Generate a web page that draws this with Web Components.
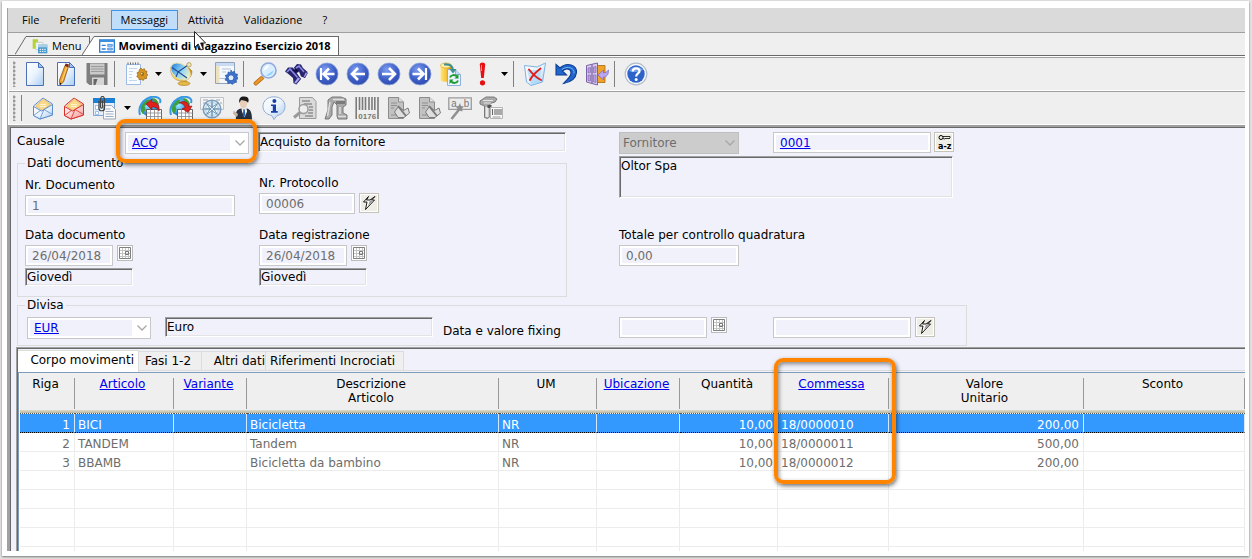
<!DOCTYPE html>
<html lang="it">
<head>
<meta charset="utf-8">
<title>Movimenti di Magazzino Esercizio 2018</title>
<style>
html,body{margin:0;height:100%}
body{background:#e4e4e4;overflow:hidden;
 --form:#f1f1fb;--bar:#efefef;--edge:#a0a0a0;--dark:#696969;--muted:#6d6d6d;
 font:12px/16px "DejaVu Sans",Verdana,sans-serif;color:#000}
</style>
</head>
<body>
<app-window></app-window>
<script>
const BASE = `:host,*{box-sizing:border-box}button,input,select,textarea{font:inherit;color:inherit;margin:0;border-radius:0}svg{display:block}`;
let uid = 0;
function define(name, render){
  customElements.define(name, class extends HTMLElement{
    constructor(){ super(); this.attachShadow({mode:'open'}); }
    connectedCallback(){
      const t = document.createElement('template');
      t.innerHTML = render(this);
      this.shadowRoot.replaceChildren(t.content.cloneNode(true));
    }
  });
}

/* ---------- icons, all on a 24 x 24 grid ---------- */
const DEFS = `<defs>
<linearGradient id="pg" x1="0" y1="0" x2="1" y2="1"><stop offset="0" stop-color="#fff"/><stop offset=".5" stop-color="#eaf3fd"/><stop offset="1" stop-color="#a9cdf3"/></linearGradient>
<radialGradient id="bl" cx=".4" cy=".3" r=".8"><stop offset="0" stop-color="#7d9cf0"/><stop offset=".55" stop-color="#3f60c8"/><stop offset="1" stop-color="#2a45a8"/></radialGradient>
<radialGradient id="gl" cx=".4" cy=".4" r=".7"><stop offset="0" stop-color="#9fe8ff"/><stop offset=".6" stop-color="#2f9be6"/><stop offset="1" stop-color="#0f55b4"/></radialGradient>
<linearGradient id="ds" x1="0" y1="0" x2="1" y2="0"><stop offset="0" stop-color="#2c86dc"/><stop offset=".5" stop-color="#8ed2f6"/><stop offset="1" stop-color="#f3f4c4"/></linearGradient>
<linearGradient id="gd" x1="0" y1="0" x2="1" y2="0"><stop offset="0" stop-color="#ffe680"/><stop offset=".5" stop-color="#f8c63a"/><stop offset="1" stop-color="#c98a10"/></linearGradient>
<linearGradient id="rd" x1="0" y1="0" x2="1" y2="1"><stop offset="0" stop-color="#fff"/><stop offset="1" stop-color="#f79a96"/></linearGradient>
</defs>`;
const navBall = inner => `<circle cx="12" cy="12" r="11" fill="url(#bl)" stroke="#8fa3dc" stroke-width=".8"/><g fill="none" stroke="#fff" stroke-width="2.600">${inner}</g>`;
const envelope = (s, f) => `<path d="M2.500 10 12 2l9.500 6v11l-12.500 4-6.500-3.500z" fill="url(#${f})" stroke="${s}"/><path d="M4.500 10 12.500 3l7 5.500-8 6z" fill="#fbd98a" stroke="#e2ae52" stroke-width=".7"/><path d="M9 8.500h6M9 10.500h6" stroke="#fff3cf"/><path d="M2.500 10.500 10.500 15 21.500 8.500V19L9 23l-6.500-3.500z" fill="url(#${f})" stroke="${s}" stroke-linejoin="round"/><path d="M2.500 19.500 9.500 14.500M9 23l4-9.500 8.500 5" fill="none" stroke="${s}" stroke-width=".8"/>`;
const globeTable = arrow => `<circle cx="11.500" cy="11" r="9.300" fill="url(#gl)"/><path d="M3.500 9c3-5 6-6 8-5l-2 4-3 2 1 4-3 4c-2-3-2-6-1-9zM14 2c4 0 6 3 7 6l-4 1z" fill="#3da03a"/><path d="M2 19C-1 9 9-1 18 1c4 1 5 3 4 6" fill="none" stroke="#3a97e4" stroke-width="2"/><path d="M8.500 13.500h15v10h-15z" fill="#fff" stroke="#444" stroke-width=".8"/><path d="M8.500 17h15M8.500 20.500h15M12.500 13.500v10M16.500 13.500v10M20 13.500v10" stroke="#888" stroke-width=".8"/>${arrow}`;
const docPen = `<path d="M2.500 1.500h10l5 4.500v16.500h-15z" fill="#c2c2c2" stroke="#8c8c8c"/><path d="M12.500 1.500V6h5" fill="#e2e2e2" stroke="#8c8c8c"/><path d="M5 7h6M5 9.500h6M5 12h3M5 19h6" stroke="#8f8f8f"/><path d="m8.500 16 4-5.500 5 4 4.500-2.500 1.500 5-5.500 4.500h-6z" fill="#dedede" stroke="#7a7a7a"/><path d="m12 10 8 10" stroke="#7a7a7a" stroke-width="2"/>`;
const ICONS = {
 page:`<path d="M3.500.5h12l5 5v18h-17z" fill="url(#pg)" stroke="#4a70b8"/><path d="M15.500.5v5h5z" fill="#9fc3ef" stroke="#4a70b8" stroke-linejoin="round"/>`,
 edit:`<path d="M3.500.5h12l5 5v18h-17z" fill="url(#pg)" stroke="#4a70b8"/><path d="M15.500.5v5h5z" fill="#9fc3ef" stroke="#4a70b8"/><path d="M11 3.500 14.500 4.500 9.500 20 6 23l-.5-4.800z" fill="#f0a22c" stroke="#96560f" stroke-width=".8"/><path d="M11.500 1.500 15 2.600l-.7 2.400-3.500-1.100z" fill="#7c2222"/><path d="M6 23l-.3-2.500 1.800.9z" fill="#111"/><path d="M12.500 5.500 8 19" stroke="#ffd886"/>`,
 save:`<path d="M1.500 1h21v22H4.500l-3-2.500z" fill="#7e7e7e"/><path d="M5 1.500h14.500v11H5z" fill="#c9c9c9"/><path d="M6 4.500h12.500M6 7h12.500M6 9.500h12.500" stroke="#9c9c9c"/><path d="M7 15.500h12V23H7z" fill="#d5d5d5"/><path d="M8.500 17h4l-2 6h-2z" fill="#666"/>`,
 gearnote:`<path d="M2.500 2.500h14v20h-14z" fill="#f8fbff" stroke="#9dbbe4"/><path d="M4 2.500v-2M6.500 2.500v-2M9 2.500v-2M11.500 2.500v-2M14 2.500v-2" stroke="#666"/><path d="M5 6.500h8M5 9.500h4M5 12.500h3M5 15.500h3M5 18.500h8" stroke="#c3d5ec"/><g transform="translate(2.800 1.500) scale(.88)"><path d="m16 5 1.500 2 2.500-1 .7 2.400 2.300.6-.8 2.500L24 13l-1.800 1.500.3 2.500-2.500.2-1.200 2-2.300-1.300-2.500.6-.4-2.500-2.300-1 1.300-2-1-2.500 2.300-.7.300-2.500z" fill="#d9951f" stroke="#96600c" stroke-width=".8"/><circle cx="17.500" cy="12" r="2" fill="#7b5a1b"/><circle cx="17" cy="11.600" r="1" fill="#f5dfa6"/></g>`,
 dish:`<path d="M11 20.500 14 15l5 5.500z" fill="url(#gd)"/><ellipse cx="15" cy="21.500" rx="6" ry="2" fill="#e4b94a" stroke="#b48a32" stroke-width=".7"/><path d="M1.500 5C1 13 5 19 13 19c6 0 10-4 10-10L20 6z" fill="url(#gd)" stroke="#a9894a" stroke-width=".6"/><ellipse cx="11.500" cy="9.500" rx="10.800" ry="7.200" transform="rotate(36 11.500 9.500)" fill="url(#ds)" stroke="#e6dfae"/><path d="M3 5.500 18 16M9 10l10-7M9 10 7 15" stroke="#234b94" stroke-width="1.100"/><circle cx="20" cy="2.800" r="2.200" fill="#f2e5ae" stroke="#a6935a" stroke-width=".8"/>`,
 wingear:`<path d="M1.500.5h19v21h-19z" fill="#f4f8fd" stroke="#8fa3bf"/><path d="M2 1h18v3H2z" fill="#c9dbf2"/><path d="M2 4h3.500v17H2z" fill="#ece2c0"/><path d="M5.500 16.500h8M8 7h9M8 10h4" stroke="#b3c4da"/><path d="m17 8 1 2.300 2.400-1 .6 2.500 2.600.4-.7 2.400 1.500 1.900-2.200 1.300.3 2.600-2.600-.1-1.500 2.200-2-1.700-2.500.8-.4-2.600-2.500-1 1.300-2.300-1-2.400 2.500-.8.300-2.600 2.400.8z" fill="#3c72cf" stroke="#1d4c9e" stroke-width=".6"/><circle cx="17" cy="15.800" r="3" fill="#dfeaff" stroke="#1d4c9e" stroke-width=".8"/>`,
 search:`<path d="m1 20.500 7.500-6.500 2.500 2.500-7.500 6.500c-1.500.8-3-1-2.500-2.500z" fill="#e9932a" stroke="#a8600d" stroke-width=".8"/><circle cx="15.500" cy="8.500" r="7.500" fill="#d9eeff" stroke="#8fa8d8" stroke-width="1.600"/><path d="M10.500 9c0-3.500 2.500-5.500 5.500-5.500-1 3-3 4-5.500 5.500z" fill="#fff"/><path d="M13 13.500c4 1 7-2 7.500-5z" fill="#8fd0ff"/>`,
 binoc:`<path d="m1 9.500 3-4 5 0 3 4.500 5 7-4.500 5.500-3-1.500-.5-5-4-3.500z" fill="#27246f"/><path d="m10 5.500 3-3.500 4 .5 2 3.500 4.500 4-2.500 6-4-1.500-2-5-4-1z" fill="#27246f"/><path d="m3 10 3-3 8 9M12 6l3-2 5 6" fill="none" stroke="#8c8ae0" stroke-width="1.600"/><path d="m12 22-2-1.500 4-5.500 2.500 1.500zM21 15.500l-1.500-1 2-4.500 2 1z" fill="#a8a6ec" stroke="#27246f" stroke-width=".6"/><path d="m8 8 5-1 2 3-3 1z" fill="#12104a"/>`,
 first:navBall('<path d="M6 6v12" stroke-width="2.200"/><path d="M19.500 12H9.500M14 6.500 8.500 12l5.500 5.500"/>'),
 prev:navBall('<path d="M19 12H6.500M12 6l-6 6 6 6"/>'),
 next:navBall('<path d="M5 12h12.500M12 6l6 6-6 6"/>'),
 last:navBall('<path d="M18 6v12" stroke-width="2.200"/><path d="M4.500 12h10M10 6.500l5.500 5.500-5.500 5.500"/>'),
 refresh:`<path d="M1.500 3.500v14c0 3 11 3 11 0v-14z" fill="url(#gd)"/><ellipse cx="7" cy="3.500" rx="5.500" ry="2.500" fill="#fff0a8" stroke="#d9a930" stroke-width=".7"/><path d="M8.500 7.500h8l5 5v11h-13z" fill="#eaf3ff" stroke="#8fb0dc"/><path d="M16.500 7.500v5h5" fill="#c3dbf7" stroke="#8fb0dc"/><path d="M5 2.500c6-1 9 2 9 6" fill="none" stroke="#3d8f8f" stroke-width="2.200"/><path d="m10.500 7 3.500 4.500L17.500 7z" fill="#3d8f8f"/><path d="M11 15.500c1-3 5-3 7-1M19 18.500c-1 3-5 3-7 1" fill="none" stroke="#1f9a2d" stroke-width="2"/><path d="m19.500 12v4.500h-4zM10.500 22v-4.500h4z" fill="#1f9a2d"/>`,
 bang:`<path d="M9.800 2.500C9.800-.3 15.200-.3 15.200 2.500L13.800 16h-2.600z" fill="#e80f12"/><circle cx="12.500" cy="20.800" r="2.600" fill="#e80f12"/><path d="M11.500 3v6" stroke="#ff8a80"/>`,
 del:`<path d="M1.500 3.500 14 5l8.500-4-3 19L8 23.500 3.500 20z" fill="url(#pg)" stroke="#7db2e2"/><path d="M4 8h14l-2 13-8 1.500z" fill="#9fd2f6" opacity=".6"/><path d="m14 5 8.500-4" stroke="#9cc9ee" fill="none" stroke-width=".7"/><path d="M6 7.500c3 4 7 8 12 10.500M17.500 6.500C13 10 9 14 7 18" stroke="#e01c1c" stroke-width="1.900" fill="none" stroke-linecap="round"/>`,
 undo:`<path d="M2 2.500v10.500h10.500L8.500 9c5-4.500 10-1 8 4-1 3-4 5-7 8.500 8-1.500 12.500-6 13-11C23 3 13-.5 6 6z" fill="#2266cc" stroke="#0b3f97" stroke-width="1.100"/><path d="M8 7.500c5-4 13-2 12 4" fill="none" stroke="#6fb2f5"/>`,
 door:`<path d="M12 3.500h8v17h-8z" fill="#f0a32b" stroke="#aa6a10" stroke-width=".8"/><path d="M1.500 3.500 12.500 1v22l-11-3z" fill="#d9cbee" stroke="#7c63a8"/><path d="M7 2.500v19" stroke="#7c63a8" stroke-width="1.300"/><path d="M3 6l2.500-.5v5L3 11zM8.500 5l2.500-.5v6l-2.500.3zM3 13h2.500v6L3 18.500zM8.500 13H11v7.500l-2.500-.5z" fill="#b79fe0" stroke="#7c63a8" stroke-width=".6"/><path d="M23.500 8c0 5-2 7-5 7v3L13 13l5.500-5v3c2 0 3-1 5-3z" fill="#b9a5f0" stroke="#7a63c0" stroke-width=".7"/>`,
 help:`<circle cx="12" cy="12" r="10.800" fill="#f8faff" stroke="#b4bccb" stroke-width="1.200"/><circle cx="12" cy="12" r="8.700" fill="#2d62c8"/><path d="M5 9c2-5 11-6 14-1-4 2-10 3-14 1z" fill="#6d9cee"/><path d="M8.700 9.500C9 5.500 15.500 5.500 15.500 9c0 2.500-3.300 2.500-3.300 5.500" fill="none" stroke="#fff" stroke-width="2.300"/><circle cx="12.200" cy="17.500" r="1.500" fill="#fff"/>`,
 mail:envelope('#5e8fcc','pg'),
 mailred:envelope('#d8302c','rd'),
 attach:`<path d="M.5 4.500h21v15H.5z" fill="#e6f0fb" stroke="#7fa8d8"/><path d="M0 2h22v5H0z" fill="#1c7fd6"/><path d="M2.500 9.500h3v4h-3zM2.500 15.500h3v3h-3z" fill="#fff" stroke="#7fa8d8" stroke-width=".7"/><path d="M10.500 9.500h8l4 4v9.500h-12z" fill="#fafafa" stroke="#9aa6b5"/><path d="M12.500 13h5M12.500 15.500h8M12.500 18h8M12.500 20.500h8" stroke="#9db0c8"/><path d="M6 5v7.500c0 3 5.500 3 5.500 0V3.500c0-4-4-4-4 0V11c0 1.500 2 1.500 2 0V4.500" fill="none" stroke="#444" stroke-width="1.200"/>`,
 globeup:globeTable('<path d="m8 8 6-5v3c5 0 8 3 7 9-1-3-4-4.500-7-4v3z" fill="#e2201c" stroke="#8f0f0d" stroke-width=".6"/>'),
 globedown:globeTable('<path d="m23 10-4 6.500-6-4 3-.5c0-3-3-5-6-5 5-3 9-1 10 3.500z" fill="#e2201c" stroke="#8f0f0d" stroke-width=".6"/>'),
 compass:`<path d="M.5 1.500h23v12H.5z" fill="#f4f4f4" stroke="#c0c3c9"/><path d="M3 4h5M3 7h2M16 4h4M20 7h2" stroke="#a0a6b0"/><circle cx="12" cy="13" r="8.800" fill="#e2f0fb" stroke="#7d9cb8" stroke-width="1.500"/><circle cx="12" cy="13" r="6.500" fill="none" stroke="#b4cbe0"/><path d="m12 5 1 7 7 1-7 1-1 7-1-7-7-1 7-1z" fill="#9cc5df" stroke="#5f8aa8" stroke-width=".6"/><path d="m6.500 7.500 6.500 4.500 4.500 6.500-6.500-4.500zM17.500 7.500l-4.500 6.500-6.500 4.500 4.500-6.500z" fill="#fff" stroke="#4b7c9c" stroke-width=".8"/>`,
 person:`<path d="M5 23.500c-.5-7 0-10 5-11l3 1 3-1c4 1 5 5 5 11z" fill="#26303e"/><path d="m10.500 12.500 2.500 1.500 2.500-1.500.5 3-2.500 6-2.500-6z" fill="#fff"/><path d="M12.300 14h1.600l.5 5-1.300 2-1.300-2z" fill="#2a60b0"/><ellipse cx="12.500" cy="7.500" rx="3.600" ry="4.800" fill="#e8cdb8"/><path d="M8.500 7C7 1.500 11 0 13.500.5c4 0 5 3 3.500 6.500-1-3-5-2-7-3z" fill="#1a1a1a"/><path d="M2.500 14.500 7 18l-1 3-4-3z" fill="#c8b2a2"/>`,
 info:`<path d="M12 .8c7 0 11 4.500 11 9.500 0 5-3.500 8.500-8 9.200L12 23.500l-2.500-4.200C4 18.500 1 15 1 10.300 1 5 5.500.8 12 .8z" fill="url(#pg)" stroke="#8fabd2"/><circle cx="12.400" cy="5" r="2" fill="#1a3fa8"/><path d="M9 8.500h5v6.500h1.700v1.700H9V15h1.800v-5H9z" fill="#1a3fa8"/>`,
 docfind:`<path d="M6.500 1.500h13l3.500 4v17h-16.500z" fill="#dadada" stroke="#9a9a9a"/><path d="M9 5h8M11 8h8M16 11h4M16 14h4M15 17h5M12 20h8" stroke="#8e8e8e" stroke-width="1.300"/><circle cx="10.500" cy="13" r="4.500" fill="#ededed" stroke="#9a9a9a" stroke-width="1.500"/><path d="m7 16.500-6 5" stroke="#9a9a9a" stroke-width="3"/>`,
 machine:`<path d="M4 4 8 1h9l5 2v6l-3 2v6l4 2v4h-9l-1-3V9l-3-3-2 5v8l-3 4H1l3-9z" fill="#a9a9a9" stroke="#787878"/><path d="M6 6 3.500 20M9 3.500h11M16 11v7M14 20.500h8" stroke="#dedede" stroke-width="1.500"/><path d="M12 5h9v3h-9z" fill="#7b7b7b"/>`,
 barcode:`<path d="M1.200 1v22M4.500 1v13M7.500 1v13M10.500 1v13M14 1v13M17 1v13M19.800 1v13M23 1v22" stroke="#7b7b7b" stroke-width="1.600"/><text x="12.200" y="22.500" text-anchor="middle" font-family="Liberation Sans" font-weight="bold" font-size="8" fill="#777">0176</text>`,
 docpen:docPen,
 wand:`<path d="M.8 1.800h22.500v11.500H.8z" fill="#ececec" stroke="#9c9c9c" stroke-width="1.300"/><text x="3" y="11" font-family="Liberation Mono" font-size="10" fill="#777">a</text><text x="15.500" y="11" font-family="Liberation Mono" font-size="10" fill="#777">b</text><path d="m3.500 23 8-10" stroke="#919191" stroke-width="2.600"/><path d="m12 7 1 3 3 .5-2 2 .5 3-3-1-2.500 1 .5-3-2-2 3-.5z" fill="#8e8e8e"/>`,
 scanner:`<path d="M1 5 7 1h8l3 2-2 3-5 1.500v13l-2.500 2-3-1V10L1 8z" fill="#a9a9a9" stroke="#7a7a7a"/><path d="M4 4.500h10M5 7h7" stroke="#e4e4e4"/><path d="M6.500 11h3v10h-3z" fill="#e9e9e9"/><path d="M8.500 9h4v3h-4z" fill="#555"/><path d="M11.500 11.500h12v11h-12z" fill="#fafafa" stroke="#b4b4b4"/><path d="M13.500 13v6M16 13v6M18 13v6M20 13v6M22 13v6" stroke="#666" stroke-width="1.100"/><path d="M13.500 21h8" stroke="#999"/>`,
 form:`<path d="M1 3h22v18H1z" fill="#fff" stroke="#2b7cd4" stroke-width="2"/><path d="M1 3h22v3H1z" fill="#3e8ede"/><path d="M4 11h6M4 16.500h6" stroke="#2b7cd4" stroke-width="2"/><path d="M13 9.500h7v3h-7zM13 15h7v3h-7z" fill="#9cc4f5" stroke="#2b7cd4"/>`,
 tree:`<path d="M1 2h8v4h5v10H1z" fill="#b4d334"/><path d="M5.500 6.500h11v11h-11z" fill="#f3f3f3" stroke="#c4c4c4"/><path d="M9 10h14v13H9z" fill="#4a9cce"/><path d="M9 10h14v4H9z" fill="#a9cfe6"/><path d="M11.500 17h2M15 17h2M18.500 17h2M11.500 20h2M15 20h2M18.500 20h2" stroke="#fff" stroke-width="1.500"/>`
};
define('ui-icon', el => {
  const s = el.getAttribute('size') || 24;
  return `<style>:host{display:block;flex:none}svg{display:block}</style><svg width="${s}" height="${s}" viewBox="0 0 24 24" aria-hidden="true">${DEFS}${ICONS[el.getAttribute('name')]}</svg>`;
});

/* ---------- menu and document tabs ---------- */
define('menu-bar', () => `<style>${BASE}
:host{display:block;background:#dadada;border-bottom:1px solid var(--edge);font:11px/18px "Open Sans","Noto Sans",sans-serif}
nav{display:flex;padding:2px 0 2px 5px}
button{background:none;border:1px solid transparent;padding:0 9px;height:20px;line-height:18px;white-space:nowrap}
button.on{background:#c0ddfa;border-color:#3a95ee}
</style><nav><button>File</button><button>Preferiti</button><button class="on">Messaggi</button><button>Attività</button><button>Validazione</button><button>?</button></nav>`);

define('doc-tabs', () => `<style>${BASE}
:host{display:block;background:var(--bar);border-bottom:1px solid var(--dark);font:11px/18px "Open Sans","Noto Sans",sans-serif}
div{display:flex;align-items:flex-end;height:22px;padding-left:7px}
button{display:flex;align-items:center;border:0;padding:0;background:none;height:19px;white-space:nowrap}
span{display:flex;align-items:center;gap:4px;height:19px;border-top:1px solid var(--dark);border-right:1px solid var(--dark);padding-right:7px}
.on{margin-left:-8px;font-weight:bold}
.on span{background:#fff}
</style><div role="tablist">
<button role="tab"><svg width="17" height="19"><path d="M0 18.500 11 .5H17" fill="none" stroke="#696969"/></svg><span><ui-icon name="tree" size="16"></ui-icon>Menu</span></button>
<button role="tab" class="on" aria-selected="true"><svg width="17" height="19"><path d="M0 19 12 .5H17V19z" fill="#fff"/><path d="M0 19 12 .5H17" fill="none" stroke="#696969"/></svg><span><ui-icon name="form" size="16"></ui-icon>Movimenti di Magazzino Esercizio 2018</span></button>
</div>`);

/* ---------- toolbars: "|" is a separator, "v" a drop-down arrow ---------- */
define('tool-bar', el => `<style>${BASE}
:host{display:block;background:var(--bar);border-bottom:1px solid #fff}
div{display:flex;align-items:center;height:32px;padding-left:4px}
i{width:6px;height:26px;background:radial-gradient(circle at 1px 2px,#9a9a9a 1px,transparent 2px) 0 0/6px 4px}
button{border:0;background:none;padding:0;height:28px;display:grid;place-items:center;flex:none}
.b{width:31px}.v{width:14px}
.s{width:8px;height:26px;background:linear-gradient(#808080,#808080) 2px 0/1px 100% no-repeat}
</style><div role="toolbar"><i></i>${el.getAttribute('items').split(' ').map(n =>
  n==='|' ? '<span class="s"></span>' :
  n==='v' ? '<button class="v" aria-label="Altro"><svg width="7" height="4"><path d="M0 0h7L3.500 4z"/></svg></button>' :
  `<button class="b" aria-label="${n}"><ui-icon name="${n}"></ui-icon></button>`).join('')}</div>`);

/* ---------- form controls ---------- */
define('ui-field', el => {
  const a = n => el.getAttribute(n) || '', id = 'f' + (++uid), w = a('width');
  const lab = a('label') ? `<label for="${id}">${a('label')}</label>` : '';
  const aria = lab ? '' : `aria-label="${a('name')}"`;
  const kind = a('kind') || 'edit';
  let c;
  if (kind === 'combo') c = `<div class="combo ${a('tone')}"><select id="${id}" ${aria}><option>${a('value')}</option></select><svg width="10" height="6"><path d="M.5.5 5 5 9.500.5" fill="none" stroke="#a8a8a8" stroke-width="1.300"/></svg></div>`;
  else if (kind === 'area') c = `<textarea id="${id}" class="flat" ${aria} readonly>${a('value')}</textarea>`;
  else c = `<input id="${id}" class="${kind} ${a('tone')}" ${aria} value="${a('value')}" ${kind==='flat'?'readonly':''}>`;
  return `<style>${BASE}
:host{display:flex;flex-direction:column;gap:2px;white-space:nowrap}
:host([inline]){flex-direction:row}
:host([inline]) label{width:106px;line-height:18px}
.row{display:flex;align-items:flex-start;gap:4px}
input,select,textarea,.combo{width:${w}px;display:block}
.edit{height:21px;border:1px solid #c8c8c8;box-shadow:inset 0 0 0 2px #fff;background:var(--form);color:var(--muted);padding:0 6px}
.flat{height:20px;border:1px solid #fff;border-top-color:#a0a0a0;border-left-color:#a0a0a0;box-shadow:inset 1px 1px #696969,inset -1px -1px #e3e3e3;background:var(--form);padding:0 1px;outline:0}
textarea{height:42px!important;padding:1px!important;resize:none;overflow:hidden;line-height:16px}
:host([slim]) .flat{height:18px}
.link,.link select{color:#0000f0;text-decoration:underline}
.combo{display:grid;align-items:center;height:22px}
.combo>*{grid-area:1/1}
.combo svg{justify-self:end;margin-right:4px;pointer-events:none}
select{appearance:none;height:22px;border:1px solid #c8c8c8;padding:0 6px;outline:0;background:linear-gradient(var(--form),var(--form)) 2px 2px/calc(100% - 20px) calc(100% - 4px) no-repeat #fff}
.off select{background:#ccc;border-color:#bfbfbf;color:var(--muted);padding-left:3px}
</style>${lab}<div class="row">${c}<slot></slot></div><slot name="below"></slot>`;
});
define('ui-action', el => {
  const k = el.getAttribute('kind');
  const art = {
    bolt:`<svg width="14" height="14"><path d="M6.500.5 1.500 6H5l-1.500 7.500L12.500 4H9.500L13 .5 8 4H4.500z" fill="#fff" stroke="#000" stroke-width=".9"/><path d="M8 4.500h3L6 10z" fill="#999"/></svg>`,
    cal:`<svg width="12" height="12"><path d="M.5.5h11v11H.5z" fill="#fff" stroke="#808080"/><path d="M1 3.500h10M1 6.500h10M1 9.500h10M3.500 1v10M6.500 1v10M9.500 1v10" stroke="#c4c4c4"/><path d="M6.500 4.500h3v3h-3z" fill="none" stroke="#777"/></svg>`,
    key:`<svg width="15" height="17"><circle cx="4" cy="3.500" r="2" fill="none" stroke="#000"/><path d="M6 2.500h7v1.500l-1 1-1-1-1 1-1-1-1 1-2-.5" fill="none" stroke="#000" stroke-width=".8"/><text x="1" y="15" font-family="DejaVu Sans" font-weight="bold" font-size="8">a-z</text></svg>`
  }[k];
  return `<style>${BASE}:host{display:block}button{display:grid;place-items:center;padding:0;width:20px;height:20px;border:1px solid #c5c2b8;background:#efeee6;box-shadow:inset 0 0 0 1px #fff}.cal{width:16px;height:16px;border-color:#bbb}</style><button class="${k}" aria-label="${k}">${art}</button>`;
});

/* orange frame laid over the content it calls out */
define('call-out', () => `<style>:host{position:absolute;z-index:5;box-sizing:border-box;border:4px solid #ff8400;border-radius:9px;box-shadow:1px 2px 4px rgba(0,0,0,.55),inset 1px 2px 4px rgba(0,0,0,.45);pointer-events:none}</style>`);

define('movement-form', () => `<style>${BASE}
:host{display:block;padding:4px 0 0 6px}
.top{display:grid;grid-template-columns:550px 1fr;column-gap:52px}
.line{display:flex;align-items:flex-start}
.causale{position:relative;margin-right:9px}
call-out{left:99px;top:-13px;width:141px;height:44px}
fieldset{margin:0;min-width:0;border:1px solid #dcdcdc;padding:4px 7px 10px}
legend{padding:0 2px;line-height:16px}
.left fieldset{margin-top:1px}
.doc{display:grid;grid-template-columns:234px 1fr;row-gap:11px}
.low{align-self:end}.high{align-self:start;height:41px}
.right{display:flex;flex-direction:column;gap:2px}
.right .line{gap:3px}
.gap{margin-right:31px}
.total{margin-top:27px}
.divisa{width:950px;padding-bottom:6px}
.cells{display:grid;grid-template-columns:138px 278px 176px 154px auto;align-items:start;padding-left:2px}
.cells p{margin:0;align-self:end}
</style>
<div class="top"><div class="left">
 <div class="line"><div class="causale"><ui-field inline kind="combo" tone="link" label="Causale" value="ACQ" width="124"></ui-field><call-out></call-out></div>
 <ui-field kind="flat" name="Descrizione causale" value="Acquisto da fornitore" width="308"></ui-field></div>
 <fieldset><legend>Dati documento</legend><div class="doc">
  <ui-field class="low" label="Nr. Documento" value="1" width="210"></ui-field>
  <ui-field class="high" label="Nr. Protocollo" value="00006" width="96"><ui-action kind="bolt"></ui-action></ui-field>
  <ui-field label="Data documento" value="26/04/2018" width="88"><ui-action kind="cal"></ui-action><ui-field slot="below" slim kind="flat" name="Giorno documento" value="Giovedì" width="108"></ui-field></ui-field>
  <ui-field label="Data registrazione" value="26/04/2018" width="88"><ui-action kind="cal"></ui-action><ui-field slot="below" slim kind="flat" name="Giorno registrazione" value="Giovedì" width="108"></ui-field></ui-field>
 </div></fieldset>
</div><div class="right">
 <div class="line"><ui-field class="gap" kind="combo" tone="off" name="Tipo soggetto" value="Fornitore" width="120"></ui-field><ui-field name="Codice fornitore" tone="link" value="0001" width="158"></ui-field><ui-action kind="key"></ui-action></div>
 <ui-field kind="area" name="Ragione sociale" value="Oltor Spa" width="334"></ui-field>
 <ui-field class="total" label="Totale per controllo quadratura" value="0,00" width="120"></ui-field>
</div></div>
<fieldset class="divisa"><legend>Divisa</legend><div class="cells">
 <ui-field kind="combo" tone="link" name="Divisa" value="EUR" width="124"></ui-field>
 <ui-field kind="flat" name="Descrizione divisa" value="Euro" width="268"></ui-field>
 <p>Data e valore fixing</p>
 <ui-field name="Data fixing" width="88"><ui-action kind="cal"></ui-action></ui-field>
 <ui-field name="Valore fixing" width="138"><ui-action kind="bolt"></ui-action></ui-field>
</div></fieldset>`);

/* ---------- detail grid ---------- */
const COLS = [['Riga',55],['Articolo',99,1],['Variante',73,1],['Descrizione<br>Articolo',252],['UM',98],['Ubicazione',83,1],['Quantità',98],['Commessa',111,1],['Valore<br>Unitario',195],['Sconto',0]];
const ROWS = [['1','BICI','','Bicicletta','NR','','10,00','18/0000010','200,00',''],['2','TANDEM','','Tandem','NR','','10,00','18/0000011','500,00',''],['3','BBAMB','','Bicicletta da bambino','NR','','10,00','18/0000012','200,00',''],...Array(5).fill(Array(10).fill(''))];
define('detail-grid', () => `<style>${BASE}
:host{display:block;border:1px solid #7f9db9;border-width:1px 0 0 1px;padding-left:1px;background:#fff}
table{width:100%;table-layout:fixed;border-collapse:separate;border-spacing:0;white-space:nowrap}
th{font-weight:normal;line-height:14px;height:41px;padding:4px 4px 0 0;vertical-align:top;border-bottom:1px dotted #5a5a50;
 background:linear-gradient(#989898,#989898) right 0 top 5px/1px 31px no-repeat,linear-gradient(#dedccb,#b9b6a2) 0 100%/100% 3px no-repeat,var(--bar)}
th.call{position:relative}
call-out{left:-4px;top:-15px;width:122px;height:126px}
a{color:#0000f0}
td{height:19px;line-height:14px;padding:4px 4px 0 3px;border-right:1px solid #ececec;border-bottom:1px solid #ececec;color:var(--muted)}
.n{text-align:right}
.sel td{background:#3399ff;color:#fff;border-right-color:#d4e9ff;border-bottom:1px dotted #000}
</style><table><colgroup>${COLS.map(c => `<col${c[1]?` style="width:${c[1]}px"`:''}>`).join('')}</colgroup>
<thead><tr>${COLS.map(c => `<th scope="col"${c[0]==='Commessa'?' class="call"':''}>${c[2]?`<a href="#">${c[0]}</a>`:c[0]}${c[0]==='Commessa'?'<call-out></call-out>':''}</th>`).join('')}</tr></thead>
<tbody>${ROWS.map((r,i) => `<tr${i?'':' class="sel"'}>${r.map((v,j) => `<td${[0,6,8].includes(j)?' class="n"':''}>${v}</td>`).join('')}</tr>`).join('')}</tbody></table>`);

define('detail-panel', () => `<style>${BASE}
:host{display:block;margin-left:5px;border-left:1px solid var(--edge);border-top:1px solid var(--edge)}
section{border-left:1px solid var(--dark);border-top:1px solid var(--dark);padding-top:1px}
.tabs{display:flex;align-items:flex-start;height:22px;background:linear-gradient(#dcdcdc,#dcdcdc) 0 20px/100% 1px no-repeat}
button{border:1px solid #dcdcdc;border-left:0;background:var(--bar);height:20px;margin-top:1px;padding:0 4px 0 0;text-align:center;white-space:nowrap;flex:none}
.on{background:#fff;height:22px;margin:0;border-bottom:0;padding:0 4px 3px 0;text-align:right}
.a{width:121px}.b{width:63px}.c{width:64px}.d{width:138px}
.c{padding:0;text-align:right}
</style><section><div class="tabs" role="tablist"><button role="tab" class="on a" aria-selected="true">Corpo movimenti</button><button role="tab" class="b">Fasi 1-2</button><button role="tab" class="c">Altri dati</button><button role="tab" class="d">Riferimenti Incrociati</button></div><detail-grid></detail-grid></section>`);

define('app-window', () => `<style>${BASE}
:host{display:flex;height:100%;padding:1px 3px 3px 2px}
.frame{flex:1;min-width:0;display:flex;background:#fff;box-shadow:0 1px 2px #777;padding:7px 4px 5px 5px;position:relative}
main{flex:1;min-width:0;overflow:hidden;border-left:1px solid var(--edge)}
menu-bar{margin-left:-1px}
.bars{border-top:1px solid var(--edge);margin-top:1px;padding-left:1px}
.second{border-top:1px solid var(--edge)}
.body{border:solid var(--edge);border-width:2px 0 0 2px}
.inner{border:solid var(--dark);border-width:1px 0 0 1px;background:var(--form)}
detail-panel{margin-top:1px}
.cursor{position:absolute;left:192px;top:30px;z-index:6}
</style><div class="frame"><main>
<menu-bar></menu-bar><doc-tabs></doc-tabs>
<div class="bars"><tool-bar items="page edit save | gearnote v dish v wingear | search binoc first prev next last refresh bang v | del undo door | help"></tool-bar>
<tool-bar class="second" items="| mail mailred attach v globeup globedown compass person info docfind machine barcode docpen docpen wand scanner"></tool-bar></div>
<div class="body"><div class="inner"><movement-form></movement-form><detail-panel></detail-panel></div></div>
</main><svg class="cursor" width="13" height="20"><path d="M.5.5v16l3.700-3.500 2.600 6 2.400-1-2.600-6h5z" fill="#fff" stroke="#222"/></svg></div>`);
</script>
</body>
</html>
